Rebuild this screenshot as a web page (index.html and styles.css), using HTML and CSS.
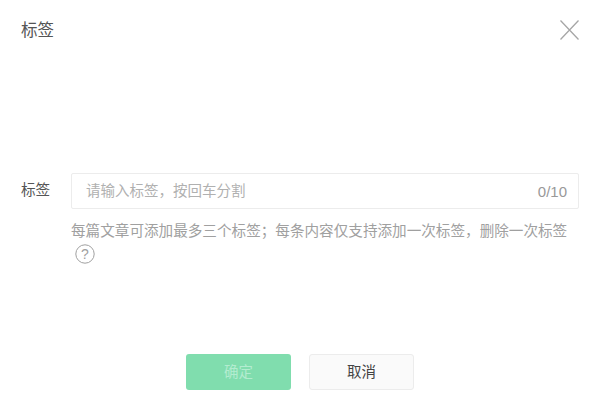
FILE: index.html
```html
<!DOCTYPE html>
<html lang="zh">
<head>
<meta charset="UTF-8" />
<meta name="viewport" content="width=device-width, initial-scale=1.0" />
<title>标签</title>
<link rel="stylesheet" href="styles.css">
</head>
<body>
  <div class="dialog">
    <div class="dialog-head">
      <h3>标签</h3>
      <svg class="close" width="19" height="20" viewBox="0 0 19 20">
        <path d="M0.5 0.5 L18.5 19.5 M18.5 0.5 L0.5 19.5" />
      </svg>
    </div>

    <div class="form-row">
      <label for="tags">标签</label>
      <div class="form-field">
        <div class="tag-input">
          <input type="text" id="tags" placeholder="请输入标签，按回车分割" />
          <span class="count">0/10</span>
        </div>
        <p class="hint">每篇文章可添加最多三个标签；每条内容仅支持添加一次标签，删除一次标签
          <svg class="help" width="20" height="20" viewBox="0 0 20 20">
            <circle cx="10" cy="10" r="9.2" />
            <text x="10" y="15" text-anchor="middle">?</text>
          </svg>
        </p>
      </div>
    </div>

    <div class="dialog-actions">
      <button class="btn-ok">确定</button>
      <button class="btn-cancel">取消</button>
    </div>
  </div>
</body>
</html>
```

FILE: styles.css
```css
body {
  margin: 0;
  background: #fff;
  font-family: "Liberation Sans", "Noto Sans CJK SC", sans-serif;
  color: #333;
}

.dialog {
  height: 405px;
  padding: 0 21px;
  box-sizing: border-box;
  display: flex;
  flex-direction: column;
}

.dialog-head {
  display: flex;
  justify-content: space-between;
  align-items: center;
  height: 60px;
}
.dialog-head h3 {
  margin: -2px 0 0;
  font-size: 16.5px;
  font-weight: normal;
  color: #555;
}
.close path {
  stroke: #a6a6a6;
  stroke-width: 1.3;
  fill: none;
}

.form-row {
  display: flex;
  margin-top: 113px;
}
.form-row label {
  width: 50px;
  flex: none;
  font-size: 14.6px;
  line-height: 35px;
  color: #555;
}
.form-field {
  flex: 1;
}

.tag-input {
  display: flex;
  align-items: center;
  height: 36px;
  box-sizing: border-box;
  border: 1px solid #ececec;
  border-radius: 2px;
  padding: 0 11px 0 14px;
}
.tag-input input {
  flex: 1;
  min-width: 0;
  border: none;
  outline: none;
  padding: 0;
  font-family: inherit;
  font-size: 14.5px;
}
.tag-input input::placeholder {
  color: #b0b0b0;
}
.count {
  font-size: 15px;
  color: #999;
}

.hint {
  margin: 12px 0 0;
  font-size: 14.6px;
  line-height: 21px;
  color: #a0a0a0;
}
.help {
  display: block;
  margin: 2px 0 0 4px;
}
.help circle {
  stroke: #a0a0a0;
  fill: none;
}
.help text {
  font-size: 14px;
  fill: #a0a0a0;
  stroke: none;
}

.dialog-actions {
  display: flex;
  justify-content: center;
  gap: 18px;
  margin-top: 90px;
}
.dialog-actions button {
  width: 105px;
  height: 36px;
  padding: 0 0 3px;
  border-radius: 3px;
  font-family: inherit;
  font-size: 14.5px;
  cursor: pointer;
}
.btn-ok {
  background: #80ddae;
  border: none;
  color: #b3ecd0;
}
.btn-cancel {
  background: #fafafa;
  border: 1px solid #ececec;
  color: #444;
}
```
